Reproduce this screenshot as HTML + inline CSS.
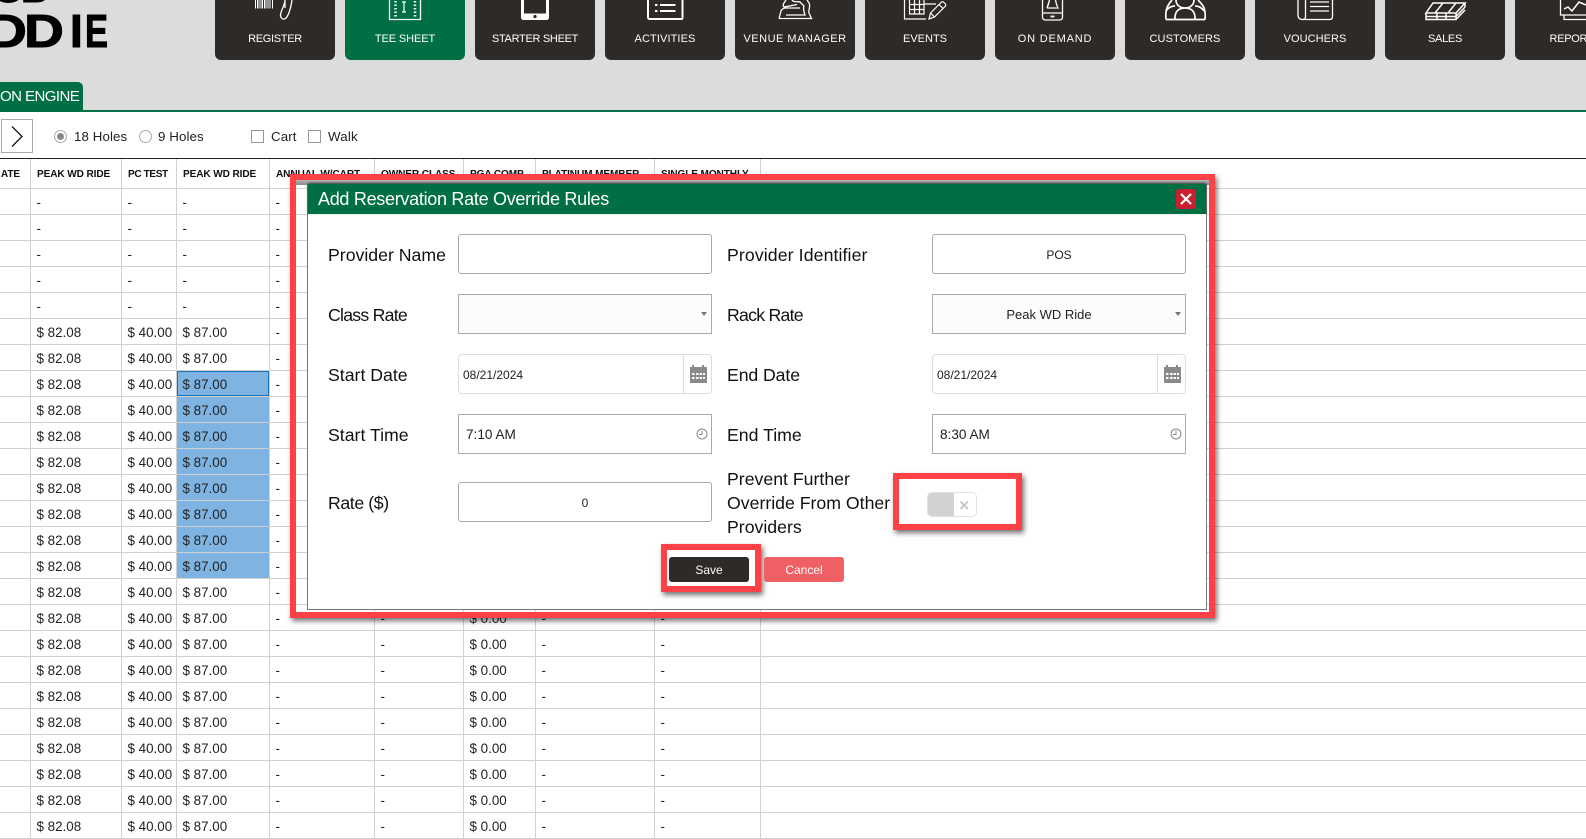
<!DOCTYPE html>
<html><head><meta charset="utf-8"><title>Tee Sheet</title>
<style>
html,body{margin:0;padding:0;width:1586px;height:833px;overflow:hidden;background:#fff;font-family:"Liberation Sans",sans-serif;color:#222}
*{box-sizing:border-box}
.a{position:absolute}
#top{left:0;top:0;width:1586px;height:110px;background:#dcdcdc}
#gl{left:0;top:110px;width:1586px;height:2px;background:#006f44}
.n{position:absolute;top:0;width:120px;height:60px;background:#2e2a27;border-radius:0 0 6px 6px;color:#fff;font-size:11px;letter-spacing:-.3px;text-align:center;line-height:78px;white-space:nowrap;overflow:hidden}
.lg{position:absolute;font-weight:bold;font-size:46px;color:#000;line-height:46px;transform-origin:0 0;-webkit-text-stroke:1px #000}
#tab{left:0;top:82px;width:83px;height:28px;background:#006f44;border-radius:0 5px 0 0;color:#fff;font-size:15px;letter-spacing:-.55px;line-height:29px;white-space:nowrap}
.t{position:absolute;font-size:13.3px;line-height:16px;white-space:nowrap;color:#222}
.rd{position:absolute;width:13px;height:13px;border:1px solid #aaa;border-radius:50%;background:#fff}
.cb{position:absolute;width:13px;height:13px;border:1px solid #999;background:#fff}
table{position:absolute;left:0;top:158px;border-collapse:separate;border-spacing:0;table-layout:fixed;width:1586px;border-top:1px solid #222}
th,td{padding:2px 0 0 5.5px;border-right:1px solid #d0d0d0;border-bottom:1px solid #d0d0d0;font-size:13.4px;height:26px;white-space:nowrap;overflow:hidden;text-align:left;color:#222;font-weight:normal}
th{height:30px;font-size:10.1px;letter-spacing:-.12px;font-weight:bold;color:#111;padding:1px 0 0 6px}
td:last-child,th:last-child{border-right:0}
td.s{background:#7fb4e2}
td.f{background:#7fb4e2;box-shadow:inset 0 0 0 1px #1672b8}
.red{position:absolute;border:6px solid #fd4146;box-shadow:2px 3px 5px rgba(0,0,0,.55)}
#m{left:307px;top:184px;width:900px;height:426px;background:#fff;border:1px solid #777;border-top:0}
#mh{left:308px;top:184px;width:898px;height:30px;background:#006f44;color:#fff;font-size:18px;letter-spacing:-.29px;line-height:30px;padding-left:10px;white-space:nowrap;box-shadow:0 -1px 2px rgba(0,0,0,.6)}
#x{left:1176px;top:189px;width:20px;height:20px;background:#c9202f;border-radius:3px}
.l{position:absolute;font-size:17.7px;line-height:24px;color:#111;white-space:nowrap}
.i{position:absolute;width:254px;height:40px;border:1px solid #aaa;border-radius:3px;background:#fff;font-size:13.6px;line-height:40px;color:#222;white-space:nowrap}
.sel{border-radius:0;background:#fcfcfc}
.d{border-color:#ddd;border-radius:4px;font-size:12px;padding-left:4px}
.d i{position:absolute;right:27px;top:0;height:38px;border-left:1px solid #ddd}
.ar{position:absolute;width:0;height:0;border-left:3px solid transparent;border-right:3px solid transparent;border-top:4px solid #777}
.btn{position:absolute;top:557px;width:80px;height:25px;border-radius:3px;color:#fff;font-size:12px;line-height:26px;text-align:center}
</style></head><body>
<div class="a" id="top"></div>
<div class="a" id="gl"></div>

<span class="lg" style="left:-8px;top:-37px">U</span><span class="lg" style="left:21px;top:-37px;transform:scaleX(.85)">B</span>
<span class="lg" style="left:-13px;top:8px;transform:scaleX(1.2)">D</span>
<span class="lg" style="left:24px;top:8px;transform:scaleX(1.2)">D</span>
<span class="lg" style="left:70px;top:8px">I</span>
<span class="lg" style="left:85px;top:8px;transform:scaleX(.75)">E</span>

<div class="n" style="left:215px">REGISTER</div>
<div class="n" style="left:345px;background:#006f44;letter-spacing:-.1px">TEE SHEET</div>
<div class="n" style="left:475px">STARTER SHEET</div>
<div class="n" style="left:605px;letter-spacing:.1px">ACTIVITIES</div>
<div class="n" style="left:735px;letter-spacing:.5px">VENUE MANAGER</div>
<div class="n" style="left:865px;letter-spacing:0">EVENTS</div>
<div class="n" style="left:995px;letter-spacing:.8px">ON DEMAND</div>
<div class="n" style="left:1125px;letter-spacing:.1px">CUSTOMERS</div>
<div class="n" style="left:1255px;letter-spacing:.05px">VOUCHERS</div>
<div class="n" style="left:1385px">SALES</div>
<div class="n" style="left:1515px;width:120px">REPORTS</div>

<svg class="a" style="left:0;top:0" width="1586" height="60" viewBox="0 0 1586 60" fill="none" stroke="#fff" stroke-width="1.3">
<!-- register -->
<path d="M255.5 0V8.5M257.5 0V8.5M259 0V8.5M261 0V8.5M262.5 0V8.5M264.5 0V8.5M266 0V8.5M268 0V8.5M270 0V8.5M272.5 0V8.5" stroke-width="1"/>
<path d="M285 0C285 5 281 10 280.5 15C280.5 18 282.5 19.5 284.5 19C288 18 291 8 292 0M285 0V8" />
<!-- tee sheet -->
<path d="M389.500 0V19.500H420.500V0M389 19.500H394"/>
<path d="M395.500 1V18M415 1V18" stroke-dasharray="1.500 2" stroke-width="2.500"/>
<path d="M404 2V12M402 2H406M402 12H406" stroke-width="1.200"/>
<!-- starter -->
<path d="M521 0H524V13.500H546V0H549V17C549 19 548 20 546 20H524C522 20 521 19 521 17Z" fill="#fff" stroke="none"/>
<circle cx="535" cy="16.500" r="1.600" fill="#2e2a27" stroke="none"/>
<!-- activities -->
<path d="M648 0V17C648 18.500 648.500 19 650 19H681C682.500 19 682.500 18.500 682.500 17V0" stroke-width="2"/>
<path d="M655 5H657.500M655 11H657.500M660 5H675.500M660 11H675.500" stroke-width="2"/>
<!-- venue -->
<path d="M779 18.500H811.500L809 13C808 10 811 6 809 3L807 0M779 18.500L781 11C782 9 784 8 786 8H800M786 0C784 3 782 5 784 7L797 4.500M792 0C794 3 798 1 800 2L804 6C803 8 804 12 805 15H786" stroke-width="1.300"/>
<!-- events -->
<path d="M904.500 0V19H926M909.500 0V14H924V0M909.500 4.500H924M909.500 9.500H924M914.500 0V14M919.500 0V14M924 4H936" stroke-width="1.200"/>
<path d="M929 19L930.500 13L941 2.500C942 1.500 943 1.500 944 2.500L945 3.500C946 4.500 946 5.500 945 6.500L934.500 17ZM930.500 13L934.500 17M939 4.500L943 8.500" stroke-width="1.200"/>
<!-- on demand -->
<path d="M1042.500 0V17C1042.500 19 1043.500 20 1045.500 20H1059.500C1061.500 20 1062.500 19 1062.500 17V0M1042.500 13H1062.500" stroke-width="1.300"/>
<path d="M1047 8H1058C1057 6 1056 3 1055.500 0M1049.500 0C1049 3 1048 6 1047 8Z" stroke-width="1.300"/>
<path d="M1050.500 16.500H1054.500" stroke-width="1.800"/>
<!-- customers -->
<path d="M1175 19.500C1174.500 11 1179 8 1185 8C1191 8 1195.500 11 1195 19.500M1166 19.500H1205M1172 0C1168 5 1165 8 1166 19.500M1198 0C1203 5 1206 8 1205 19.500M1176 0C1176 5 1180 8 1185 8C1190 8 1194 5 1194 0M1166 11C1168 8 1171 6 1175 6M1204 11C1202 8 1199 6 1195 6" stroke-width="1.700"/>
<!-- vouchers -->
<path d="M1298 0V15C1298 18 1300 19.500 1302 19.500H1330C1332 19.500 1332.500 18 1332.500 16V0M1305.500 0V17C1305.500 18.500 1304 19.500 1302 19.500" stroke-width="1.300"/>
<path d="M1310 2H1329M1310 6.500H1329M1310 11H1329" stroke-width="1.300"/>
<!-- sales -->
<path d="M1433 3H1465L1456 13H1426ZM1443 3L1435 13M1456 3L1448 13M1426 13V19.500H1456L1465 10M1426 16.500H1456M1437 13V19.500M1446 13V19.500M1456 13V19.500M1465 3V7M1456 16.500L1465 7" stroke-width="1.500"/>
<!-- report -->
<path d="M1560.500 0V15H1586M1564 15V19.500H1586" stroke-width="1.300"/>
<path d="M1564 9L1568 7L1572 11L1579 2L1586 5" stroke-width="1.500"/>
</svg>

<div class="a" id="tab">ON ENGINE</div>

<!-- toolbar -->
<div class="a" style="left:1px;top:119px;width:32px;height:34px;border:1px solid #aaa;background:#fff"></div>
<svg class="a" style="left:0;top:119px" width="34" height="34" fill="none" stroke="#111" stroke-width="1.300"><path d="M12 7.500L22 17.500L12 27.500"/></svg>
<div class="rd" style="left:54px;top:130px"></div><div class="a" style="left:57px;top:133px;width:7px;height:7px;border-radius:50%;background:#888"></div>
<div class="t" style="left:74px;top:129px;letter-spacing:.1px">18 Holes</div>
<div class="rd" style="left:139px;top:130px"></div>
<div class="t" style="left:158px;top:129px;letter-spacing:.1px">9 Holes</div>
<div class="cb" style="left:251px;top:130px"></div>
<div class="t" style="left:271px;top:129px;letter-spacing:.1px">Cart</div>
<div class="cb" style="left:308px;top:130px"></div>
<div class="t" style="left:328px;top:129px;letter-spacing:.2px">Walk</div>

<table>
<colgroup><col style="width:31px"><col style="width:91px"><col style="width:55px"><col style="width:93px"><col style="width:105px"><col style="width:89px"><col style="width:72px"><col style="width:119px"><col style="width:106px"><col></colgroup>
<tr><th style="padding-left:0;text-align:right;padding-right:10px">ATE</th><th>PEAK WD RIDE</th><th style="letter-spacing:-.4px">PC TEST</th><th>PEAK WD RIDE</th><th>ANNUAL W/CART</th><th>OWNER CLASS</th><th>PGA COMP</th><th>PLATINUM MEMBER</th><th>SINGLE MONTHLY</th><th></th></tr>
<tr><td></td><td>-</td><td>-</td><td>-</td><td>-</td><td></td><td></td><td></td><td></td><td></td></tr>
<tr><td></td><td>-</td><td>-</td><td>-</td><td>-</td><td></td><td></td><td></td><td></td><td></td></tr>
<tr><td></td><td>-</td><td>-</td><td>-</td><td>-</td><td></td><td></td><td></td><td></td><td></td></tr>
<tr><td></td><td>-</td><td>-</td><td>-</td><td>-</td><td></td><td></td><td></td><td></td><td></td></tr>
<tr><td></td><td>-</td><td>-</td><td>-</td><td>-</td><td></td><td></td><td></td><td></td><td></td></tr>
<tr><td></td><td>$ 82.08</td><td>$ 40.00</td><td>$ 87.00</td><td>-</td><td>-</td><td>$ 0.00</td><td>-</td><td>-</td><td></td></tr>
<tr><td></td><td>$ 82.08</td><td>$ 40.00</td><td>$ 87.00</td><td>-</td><td>-</td><td>$ 0.00</td><td>-</td><td>-</td><td></td></tr>
<tr><td></td><td>$ 82.08</td><td>$ 40.00</td><td class="f">$ 87.00</td><td>-</td><td>-</td><td>$ 0.00</td><td>-</td><td>-</td><td></td></tr>
<tr><td></td><td>$ 82.08</td><td>$ 40.00</td><td class="s">$ 87.00</td><td>-</td><td>-</td><td>$ 0.00</td><td>-</td><td>-</td><td></td></tr>
<tr><td></td><td>$ 82.08</td><td>$ 40.00</td><td class="s">$ 87.00</td><td>-</td><td>-</td><td>$ 0.00</td><td>-</td><td>-</td><td></td></tr>
<tr><td></td><td>$ 82.08</td><td>$ 40.00</td><td class="s">$ 87.00</td><td>-</td><td>-</td><td>$ 0.00</td><td>-</td><td>-</td><td></td></tr>
<tr><td></td><td>$ 82.08</td><td>$ 40.00</td><td class="s">$ 87.00</td><td>-</td><td>-</td><td>$ 0.00</td><td>-</td><td>-</td><td></td></tr>
<tr><td></td><td>$ 82.08</td><td>$ 40.00</td><td class="s">$ 87.00</td><td>-</td><td>-</td><td>$ 0.00</td><td>-</td><td>-</td><td></td></tr>
<tr><td></td><td>$ 82.08</td><td>$ 40.00</td><td class="s">$ 87.00</td><td>-</td><td>-</td><td>$ 0.00</td><td>-</td><td>-</td><td></td></tr>
<tr><td></td><td>$ 82.08</td><td>$ 40.00</td><td class="s">$ 87.00</td><td>-</td><td>-</td><td>$ 0.00</td><td>-</td><td>-</td><td></td></tr>
<tr><td></td><td>$ 82.08</td><td>$ 40.00</td><td>$ 87.00</td><td>-</td><td>-</td><td>$ 0.00</td><td>-</td><td>-</td><td></td></tr>
<tr><td></td><td>$ 82.08</td><td>$ 40.00</td><td>$ 87.00</td><td>-</td><td>-</td><td>$ 0.00</td><td>-</td><td>-</td><td></td></tr>
<tr><td></td><td>$ 82.08</td><td>$ 40.00</td><td>$ 87.00</td><td>-</td><td>-</td><td>$ 0.00</td><td>-</td><td>-</td><td></td></tr>
<tr><td></td><td>$ 82.08</td><td>$ 40.00</td><td>$ 87.00</td><td>-</td><td>-</td><td>$ 0.00</td><td>-</td><td>-</td><td></td></tr>
<tr><td></td><td>$ 82.08</td><td>$ 40.00</td><td>$ 87.00</td><td>-</td><td>-</td><td>$ 0.00</td><td>-</td><td>-</td><td></td></tr>
<tr><td></td><td>$ 82.08</td><td>$ 40.00</td><td>$ 87.00</td><td>-</td><td>-</td><td>$ 0.00</td><td>-</td><td>-</td><td></td></tr>
<tr><td></td><td>$ 82.08</td><td>$ 40.00</td><td>$ 87.00</td><td>-</td><td>-</td><td>$ 0.00</td><td>-</td><td>-</td><td></td></tr>
<tr><td></td><td>$ 82.08</td><td>$ 40.00</td><td>$ 87.00</td><td>-</td><td>-</td><td>$ 0.00</td><td>-</td><td>-</td><td></td></tr>
<tr><td></td><td>$ 82.08</td><td>$ 40.00</td><td>$ 87.00</td><td>-</td><td>-</td><td>$ 0.00</td><td>-</td><td>-</td><td></td></tr>
<tr><td></td><td>$ 82.08</td><td>$ 40.00</td><td>$ 87.00</td><td>-</td><td>-</td><td>$ 0.00</td><td>-</td><td>-</td><td></td></tr>
</table>

<!-- red annotation around modal -->
<div class="a" style="left:296px;top:180px;width:913px;height:5px;background:linear-gradient(#b5b5b5,#8a8a8a)"></div>
<div class="red" style="left:290px;top:174px;width:925px;height:444px"></div>
<div class="a" id="m"></div>
<div class="a" id="mh">Add Reservation Rate Override Rules</div>
<div class="a" id="x"><svg width="20" height="20" stroke="#fff" stroke-width="2.200"><path d="M5 5L15 15M15 5L5 15"/></svg></div>

<div class="l" style="left:328px;top:243px">Provider Name</div>
<div class="i" style="left:458px;top:234px"></div>
<div class="l" style="left:727px;top:243px;letter-spacing:.1px">Provider Identifier</div>
<div class="i" style="left:932px;top:234px;text-align:center;font-size:12px">POS</div>

<div class="l" style="left:328px;top:303px;letter-spacing:-.75px">Class Rate</div>
<div class="i sel" style="left:458px;top:294px"></div><div class="ar" style="left:701px;top:312px"></div>
<div class="l" style="left:727px;top:303px;letter-spacing:-.75px">Rack Rate</div>
<div class="i sel" style="left:932px;top:294px;text-align:center;padding-right:20px;font-size:13px">Peak WD Ride</div><div class="ar" style="left:1175px;top:312px"></div>

<div class="l" style="left:328px;top:363px">Start Date</div>
<div class="i d" style="left:458px;top:354px">08/21/2024<i></i></div>
<div class="l" style="left:727px;top:363px;letter-spacing:-.1px">End Date</div>
<div class="i d" style="left:932px;top:354px">08/21/2024<i></i></div>
<svg class="a" style="left:689px;top:364px" width="19" height="20"><path d="M1 3H3V1H5V3H13V1H15V3H18V19H1Z" fill="#8a8a8a"/><path d="M3 9H5.500V11H3ZM7 9H9.500V11H7ZM10.500 9H13V11H10.500ZM14 9H16V11H14ZM3 13H5.500V15H3ZM7 13H9.500V15H7ZM10.500 13H13V15H10.500ZM14 13H16V15H14Z" fill="#fff"/></svg>
<svg class="a" style="left:1163px;top:364px" width="19" height="20"><path d="M1 3H3V1H5V3H13V1H15V3H18V19H1Z" fill="#8a8a8a"/><path d="M3 9H5.500V11H3ZM7 9H9.500V11H7ZM10.500 9H13V11H10.500ZM14 9H16V11H14ZM3 13H5.500V15H3ZM7 13H9.500V15H7ZM10.500 13H13V15H10.500ZM14 13H16V15H14Z" fill="#fff"/></svg>

<div class="l" style="left:328px;top:423px">Start Time</div>
<div class="i" style="left:458px;top:414px;padding-left:7px;border-radius:0">7:10 AM</div>
<div class="l" style="left:727px;top:423px">End Time</div>
<div class="i" style="left:932px;top:414px;padding-left:7px;border-radius:0">8:30 AM</div>
<svg class="a" style="left:696px;top:428px" width="12" height="12" fill="none" stroke="#888"><circle cx="6" cy="6" r="5"/><path d="M6 2.500V6.500H3"/></svg>
<svg class="a" style="left:1170px;top:428px" width="12" height="12" fill="none" stroke="#888"><circle cx="6" cy="6" r="5"/><path d="M6 2.500V6.500H3"/></svg>

<div class="l" style="left:328px;top:491px;letter-spacing:-.4px">Rate ($)</div>
<div class="i" style="left:458px;top:482px;text-align:center;font-size:12px">0</div>
<div class="l" style="left:727px;top:467px">Prevent Further<br>Override From Other<br>Providers</div>

<div class="red" style="left:893px;top:473px;width:129px;height:57px;background:#fff"></div>
<div class="a" style="left:927px;top:492px;width:50px;height:25px;border:1px solid #e2e2e2;border-radius:5px;background:#fff;overflow:hidden"><div style="width:26px;height:25px;background:#d2d2d2"></div></div>
<svg class="a" style="left:959px;top:500px" width="11" height="11" stroke="#c8c8c8" stroke-width="2"><path d="M1.500 1.500L9 9M9 1.500L1.500 9"/></svg>

<div class="red" style="left:661px;top:544px;width:100px;height:48px;background:#fff"></div>
<div class="btn" style="left:669px;background:#2e2a27">Save</div>
<div class="btn" style="left:764px;background:#f05f63">Cancel</div>
</body></html>
